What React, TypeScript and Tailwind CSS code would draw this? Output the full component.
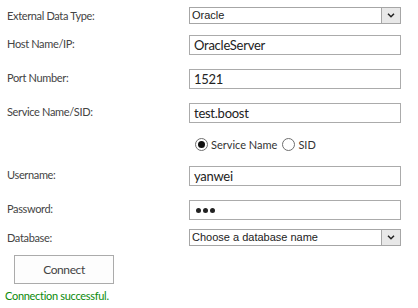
import React from "react";

const labelCls =
  "w-[189px] shrink-0 pl-[7px] pt-[1px] text-[11px] leading-[15px] tracking-[-0.35px] text-[#444]";
const inputCls =
  "h-[20px] w-[212px] border border-[#ababab] bg-white px-[4px] text-[13px] leading-[18px] tracking-[-0.25px] text-[#222]";

function Chevron() {
  return (
    <svg width="8" height="5" viewBox="0 0 8 5">
      <path d="M1 0.8 L4 3.8 L7 0.8" fill="none" stroke="#222" strokeWidth="1.5" />
    </svg>
  );
}

function Select({ value }: { value: string }) {
  return (
    <div className="flex h-[17px] w-[212px] items-stretch border border-[#a6a6a6] bg-white">
      <span className="flex-1 pl-[2px] font-['Liberation_Sans',Arial,sans-serif] text-[11px] leading-[15px] text-[#222]">
        {value}
      </span>
      <span className="flex w-[19px] items-center justify-center border-l border-[#a6a6a6] bg-[#e8e8e8]">
        <Chevron />
      </span>
    </div>
  );
}

function Row({ label, children, className }: { label: string; children: React.ReactNode; className?: string }) {
  return (
    <div className={"flex items-start " + (className ?? "")}>
      <div className={labelCls}>{label}</div>
      {children}
    </div>
  );
}

function Radio({ checked, label }: { checked?: boolean; label: string }) {
  return (
    <label className="flex items-center gap-[3px]">
      <span className="flex h-[13px] w-[13px] items-center justify-center rounded-full border border-[#6e6e6e] bg-white">
        {checked && <span className="h-[7px] w-[7px] rounded-full bg-[#111]" />}
      </span>
      <span className="text-[11px] leading-[16px] text-[#333]">{label}</span>
    </label>
  );
}

export default function App() {
  return (
    <div className="h-[308px] w-[418px] bg-white pt-[7px] font-[Lato,'Segoe_UI',sans-serif]">
      <Row label="External Data Type:">
        <Select value="Oracle" />
      </Row>
      <Row label="Host Name/IP:" className="mt-[11px]">
        <div className={inputCls}>OracleServer</div>
      </Row>
      <Row label="Port Number:" className="mt-[14px]">
        <div className={inputCls}>1521</div>
      </Row>
      <Row label="Service Name/SID:" className="mt-[14px]">
        <div className={inputCls}>test.boost</div>
      </Row>
      <div className="mt-[13px] flex h-[17px] items-center gap-[5px] pl-[195px]">
        <Radio checked label="Service Name" />
        <Radio label="SID" />
      </div>
      <Row label="Username:" className="mt-[13px]">
        <div className={inputCls}>yanwei</div>
      </Row>
      <Row label="Password:" className="mt-[14px]">
        <div className={inputCls + " flex items-center gap-[2px] pl-[6px]"}>
          <span className="h-[5px] w-[5px] rounded-full bg-[#222]" />
          <span className="h-[5px] w-[5px] rounded-full bg-[#222]" />
          <span className="h-[5px] w-[5px] rounded-full bg-[#222]" />
        </div>
      </Row>
      <Row label="Database:" className="mt-[9px]">
        <Select value="Choose a database name" />
      </Row>
      <button className="ml-[14px] mt-[9px] h-[29px] w-[100px] border border-[#ababab] bg-[#fdfdfd] text-[12px] tracking-[-0.4px] text-[#444]">
        Connect
      </button>
      <div className="mt-[4px] pl-[5px] text-[11px] leading-[16px] tracking-[-0.3px] text-[#0a8a0a]">
        Connection successful.
      </div>
    </div>
  );
}
